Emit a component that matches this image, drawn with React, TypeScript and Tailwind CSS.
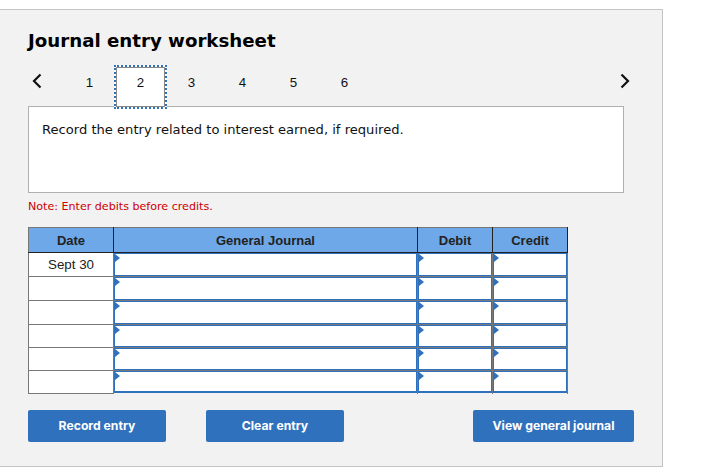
const verdana = "font-['DejaVu_Sans',sans-serif]";

function Chevron({ dir }: { dir: "left" | "right" }) {
  return (
    <svg width="10" height="16" viewBox="0 0 10 16" fill="none" stroke="#111" strokeWidth="2.2">
      <path d={dir === "left" ? "M8.5 1.5 L2 8 L8.5 14.5" : "M1.5 1.5 L8 8 L1.5 14.5"} />
    </svg>
  );
}

function InputCell({ short, last }: { short: boolean; last: boolean }) {
  return (
    <td className={"p-0 border-x border-t border-[#777] align-top " + (last ? "" : "border-b")}>
      <div className={"relative bg-white border-x border-t border-[#2f71bd] " + (last ? "border-b-2 " : "border-b ") + (short ? "h-[22px]" : "h-[23px]")}>
        <span className="absolute left-0 top-0 w-0 h-0 border-y-[4px] border-y-transparent border-l-[5px] border-l-[#2f71bd]" />
      </div>
    </td>
  );
}

function Btn({ children, className }: { children: string; className: string }) {
  return (
    <button className={"h-[32px] pt-[1px] rounded-[2px] bg-[#2f71bd] text-white text-[12.2px] font-bold font-['Inter',sans-serif] " + className}>
      {children}
    </button>
  );
}

export default function App() {
  const rows = ["Sept 30", "", "", "", "", ""];
  const tabs = [1, 2, 3, 4, 5, 6];
  return (
    <div className="w-[717px] h-[473px] bg-white pt-[9px] overflow-hidden">
      <div className="w-[663px] h-[458px] bg-[#f2f2f2] border-t border-r border-b border-[#c4c4c4] pl-[28px] pr-[28px] flex flex-col">
        <h1 className={verdana + " text-[18.2px] leading-[24px] font-bold text-black mt-[19px]"}>Journal entry worksheet</h1>
        <div className="flex items-start h-[44px] mt-[12px] relative z-10 w-[596px]">
          <div className="w-[36px] flex pl-[4px] pt-[8px]"><Chevron dir="left" /></div>
          {tabs.map((t) => (
            <div
              key={t}
              className={
                "w-[51px] h-[44px] flex items-center justify-center pb-[8px] text-[13.33px] text-[#111] font-['Liberation_Sans',sans-serif] " +
                (t === 2 ? "bg-white border-2 border-dotted border-[#2f71bd] outline outline-1 -outline-offset-3 outline-[#888] w-[53px] -mx-[1px]" : "")
              }
            >
              {t}
            </div>
          ))}
          <div className="ml-auto -mr-[6px] flex pt-[8px]"><Chevron dir="right" /></div>
        </div>
        <div className={verdana + " -mt-[3px] w-[596px] h-[87px] bg-white border border-[#b0b0b0] px-[13px] pt-[14px] text-[13.1px] leading-[18px] text-[#111]"}>
          Record the entry related to interest earned, if required.
        </div>
        <p className={verdana + " text-[11.1px] leading-[14px] text-[#cc0000] mt-[7px]"}>Note: Enter debits before credits.</p>
        <table className="mt-[13px] w-[539px] table-fixed border-collapse font-['Liberation_Sans',sans-serif]">
          <colgroup>
            <col className="w-[85px]" />
            <col className="w-[304px]" />
            <col className="w-[75px]" />
            <col className="w-[75px]" />
          </colgroup>
          <thead>
            <tr className="h-[25px] bg-[#6ea8e8] text-[13px] text-[#222]">
              {["Date", "General Journal", "Debit", "Credit"].map((h) => (
                <th key={h} className="p-0 pt-[2px] border-t border-t-[#777] border-b border-b-[#222] border-x border-x-[#222] first:border-l-[#777] text-center font-bold">
                  {h}
                </th>
              ))}
            </tr>
          </thead>
          <tbody>
            {rows.map((d, i) => (
              <tr key={i} className={i >= 3 ? "h-[23px]" : "h-[24px]"}>
                <td className="p-0 border border-[#777] bg-white text-center text-[13.33px] leading-[22px] text-[#222]">{d}</td>
                <InputCell short={i >= 3} last={i === 5} />
                <InputCell short={i >= 3} last={i === 5} />
                <InputCell short={i >= 3} last={i === 5} />
              </tr>
            ))}
          </tbody>
        </table>
        <div className="flex mt-[16px]">
          <Btn className="w-[138px]">Record entry</Btn>
          <Btn className="w-[138px] ml-[40px]">Clear entry</Btn>
          <Btn className="w-[161px] ml-[129px]">View general journal</Btn>
        </div>
      </div>
    </div>
  );
}
